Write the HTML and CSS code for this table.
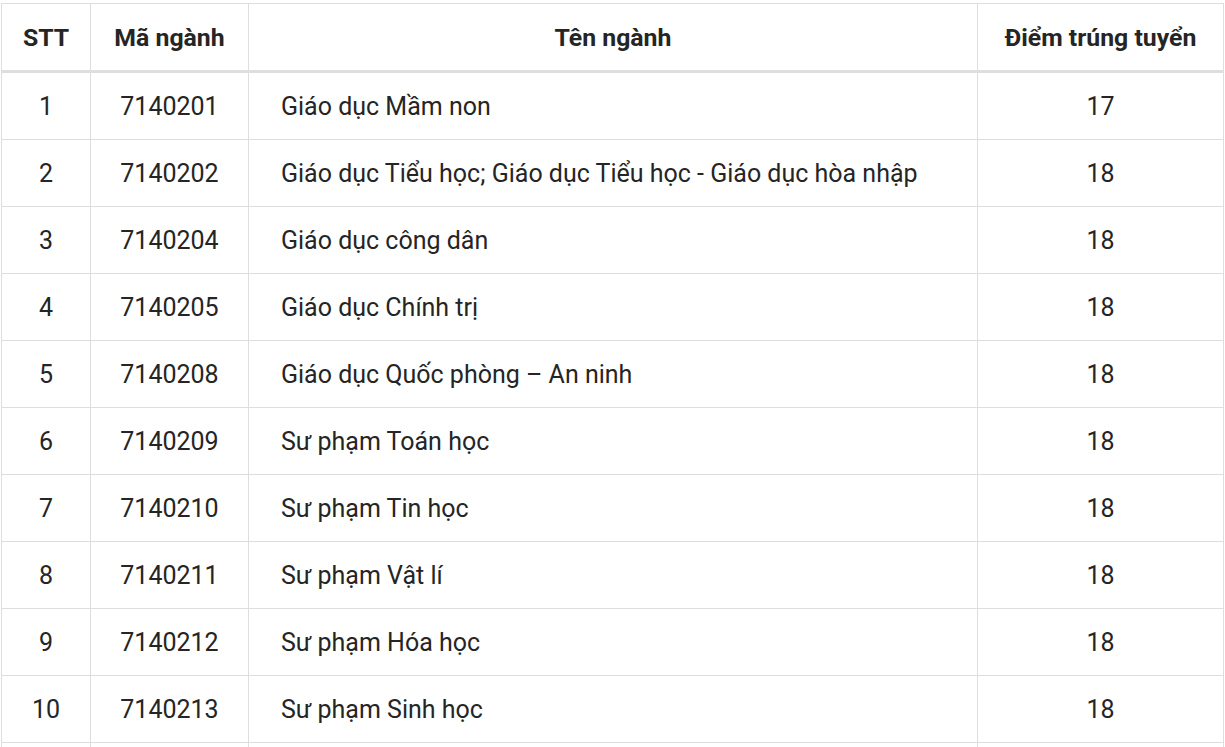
FILE: index.html
```html
<!DOCTYPE html>
<html lang="vi">
<head>
<meta charset="utf-8">
<link rel="stylesheet" href="styles.css">
</head>
<body>
<div class="wrap">
<table class="score-table">
  <colgroup>
    <col class="c-stt"><col class="c-code"><col class="c-name"><col class="c-score">
  </colgroup>
  <thead>
    <tr><th>STT</th><th>Mã ngành</th><th>Tên ngành</th><th>Điểm trúng tuyển</th></tr>
  </thead>
  <tbody>
    <tr><td>1</td><td>7140201</td><td class="name">Giáo dục Mầm non</td><td>17</td></tr>
    <tr><td>2</td><td>7140202</td><td class="name">Giáo dục Tiểu học; Giáo dục Tiểu học - Giáo dục hòa nhập</td><td>18</td></tr>
    <tr><td>3</td><td>7140204</td><td class="name">Giáo dục công dân</td><td>18</td></tr>
    <tr><td>4</td><td>7140205</td><td class="name">Giáo dục Chính trị</td><td>18</td></tr>
    <tr><td>5</td><td>7140208</td><td class="name">Giáo dục Quốc phòng – An ninh</td><td>18</td></tr>
    <tr><td>6</td><td>7140209</td><td class="name">Sư phạm Toán học</td><td>18</td></tr>
    <tr><td>7</td><td>7140210</td><td class="name">Sư phạm Tin học</td><td>18</td></tr>
    <tr><td>8</td><td>7140211</td><td class="name">Sư phạm Vật lí</td><td>18</td></tr>
    <tr><td>9</td><td>7140212</td><td class="name">Sư phạm Hóa học</td><td>18</td></tr>
    <tr><td>10</td><td>7140213</td><td class="name">Sư phạm Sinh học</td><td>18</td></tr>
    <tr class="partial"><td></td><td></td><td class="name"></td><td></td></tr>
  </tbody>
</table>
</div>
</body>
</html>
```
FILE: styles.css
```css
html, body {
  margin: 0;
  padding: 0;
  background: #fff;
  overflow: hidden;
}
.wrap {
  padding: 3px 0 0 1px;
}
.score-table {
  border-collapse: collapse;
  table-layout: fixed;
  width: 1222px;
  font-family: Roboto, "Noto Sans", sans-serif;
  color: #252525;
}
.c-stt { width: 89px; }
.c-code { width: 158px; }
.c-name { width: 729px; }
.c-score { width: 246px; }
.score-table th,
.score-table td {
  border: 1px solid #dedede;
  text-align: center;
  vertical-align: middle;
  padding: 0 4px;
  white-space: nowrap;
}
.score-table th {
  font-weight: 700;
  font-size: 24.8px;
  height: 66px;
  border-bottom: 3px solid #dedede;
}
.score-table td {
  font-size: 25px;
  height: 66px;
}
.score-table td.name {
  text-align: left;
  padding-left: 32px;
}
```
